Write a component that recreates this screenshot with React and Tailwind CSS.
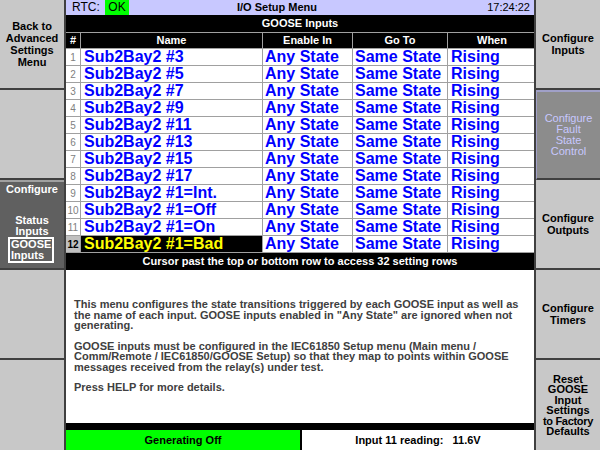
import React from "react";

const rows = [
  "Sub2Bay2 #3",
  "Sub2Bay2 #5",
  "Sub2Bay2 #7",
  "Sub2Bay2 #9",
  "Sub2Bay2 #11",
  "Sub2Bay2 #13",
  "Sub2Bay2 #15",
  "Sub2Bay2 #17",
  "Sub2Bay2 #1=Int.",
  "Sub2Bay2 #1=Off",
  "Sub2Bay2 #1=On",
  "Sub2Bay2 #1=Bad",
];

const font = { fontFamily: '"Liberation Sans", Arial, sans-serif' };

function SideBtn({ children, className = "" }) {
  return (
    <div
      className={
        "h-[90px] flex flex-col items-center justify-center text-center text-[11px] leading-[12px] font-bold border-b-2 border-[#404040] " +
        className
      }
    >
      {children}
    </div>
  );
}

export default function App() {
  return (
    <div className="w-[600px] h-[450px] flex bg-white overflow-hidden" style={font}>
      {/* Left column */}
      <div className="w-[66px] flex flex-col border-r-2 border-[#404040] bg-[#c8c8c8] text-black">
        <SideBtn className="bg-[#c8c8c8]">
          <span>Back to</span>
          <span>Advanced</span>
          <span>Settings</span>
          <span>Menu</span>
        </SideBtn>
        <SideBtn className="bg-[#c8c8c8]" />
        <div className="h-[90px] flex flex-col items-center text-center text-[11px] leading-[11px] font-bold border-b-2 border-[#404040] bg-[#606060] text-white border-t-2 border-t-[#a0a0a0]">
          <span className="mt-[2px]">Configure</span>
          <span className="mt-[20px]">Status</span>
          <span>Inputs</span>
          <div className="border-2 border-white px-[1px] text-left leading-[11px] w-[46px] mr-[2px]">
            <div>GOOSE</div>
            <div>Inputs</div>
          </div>
        </div>
        <SideBtn className="bg-[#c8c8c8]" />
        <div className="h-[90px] bg-[#c8c8c8]" />
      </div>

      {/* Center */}
      <div className="w-[468px] flex flex-col">
        {/* top bar */}
        <div className="h-[15px] bg-[#c8c8ff] flex items-stretch text-[11px] font-bold text-black relative">
          <span className="ml-[6px] w-[33px] leading-[15px] text-[12px] font-normal">RTC:</span>
          <span className="w-[24px] bg-[#00ff00] text-center leading-[15px] text-[12px] font-normal">OK</span>
          <span className="absolute left-[171px] top-0 leading-[15px]">I/O Setup Menu</span>
          <span className="ml-auto mr-[4px] leading-[15px] font-normal">17:24:22</span>
        </div>
        <div className="h-[17px] bg-black text-white text-[11px] font-bold flex items-center justify-center">
          GOOSE Inputs
        </div>
        {/* table */}
        <div className="grid grid-cols-[14px_181px_89px_94px_88px] gap-x-[1px] bg-[#a0a0a0] border-t border-[#a0a0a0]">
          {["#", "Name", "Enable In", "Go To", "When"].map((h) => (
            <div key={h} className="h-[15px] bg-black text-white text-[11px] font-bold flex items-center justify-center">
              {h}
            </div>
          ))}
        </div>
        <div className="grid grid-cols-[14px_181px_89px_94px_88px] gap-x-[1px] gap-y-[1px] bg-[#a0a0a0] pt-[1px]">
          {rows.map((name, i) => {
            const last = i === rows.length - 1;
            return (
              <React.Fragment key={name}>
                <div
                  className={
                    "h-[16px] flex items-center justify-center text-[10px] " +
                    (last ? "bg-[#c0c0c0] text-black font-bold" : "bg-white text-[#808080]")
                  }
                >
                  {i + 1}
                </div>
                <div
                  className={
                    "h-[16px] flex items-center pl-[3px] text-[16px] font-bold leading-none " +
                    (last ? "bg-black text-[#ffff00]" : "bg-white text-[#0000ff]")
                  }
                >
                  {name}
                </div>
                <div className="h-[16px] bg-white flex items-center pl-[2px] text-[16px] font-bold text-[#0000ff] leading-none">
                  Any State
                </div>
                <div className="h-[16px] bg-white flex items-center pl-[2px] text-[16px] font-bold text-[#0000ff] leading-none">
                  Same State
                </div>
                <div className="h-[16px] bg-white flex items-center pl-[3px] text-[16px] font-bold text-[#0000ff] leading-none">
                  Rising
                </div>
              </React.Fragment>
            );
          })}
        </div>
        <div className="h-[18px] bg-black text-white text-[11px] font-bold flex items-center justify-center border-t border-[#a0a0a0]">
          Cursor past the top or bottom row to access 32 setting rows
        </div>
        {/* description */}
        <div className="flex-1 bg-white pl-[8px] pr-[6px] pt-[29px] text-[11px] leading-[10.5px] font-bold text-[#404040]">
          <p>
            This menu configures the state transitions triggered by each GOOSE input as well as
            the name of each input. GOOSE inputs enabled in "Any State" are ignored when not
            generating.
          </p>
          <p className="mt-[10px]">
            GOOSE inputs must be configured in the IEC61850 Setup menu (Main menu /<br />
            Comm/Remote / IEC61850/GOOSE Setup) so that they map to points within GOOSE
            messages received from the relay(s) under test.
          </p>
          <p className="mt-[10px]">Press HELP for more details.</p>
        </div>
        <div className="h-[7px] bg-black" />
        <div className="h-[20px] flex text-[11px] font-bold text-black">
          <div className="w-[234px] bg-[#00ff00] flex items-center justify-center">Generating Off</div>
          <div className="flex-1 bg-white border-l-2 border-black flex items-center justify-center whitespace-pre">
            {"Input 11 reading:   11.6V"}
          </div>
        </div>
      </div>

      {/* Right column */}
      <div className="w-[66px] flex flex-col border-l-2 border-[#404040] bg-[#c8c8c8] text-black">
        <SideBtn className="bg-[#c8c8c8]">
          <span>Configure</span>
          <span>Inputs</span>
        </SideBtn>
        <div className="h-[90px] flex flex-col items-center justify-center text-center text-[11px] leading-[11px] border-b-2 border-[#404040] bg-[#8c8c8c] text-[#c8c8ff] border-t-2 border-t-[#a0a0c8] border-l border-l-[#a0a0c8]">
          <span>Configure</span>
          <span>Fault</span>
          <span>State</span>
          <span>Control</span>
        </div>
        <SideBtn className="bg-[#c8c8c8]">
          <span>Configure</span>
          <span>Outputs</span>
        </SideBtn>
        <SideBtn className="bg-[#c8c8c8]">
          <span>Configure</span>
          <span>Timers</span>
        </SideBtn>
        <div className="h-[90px] flex flex-col items-center justify-center text-center text-[11px] leading-[10.5px] font-bold bg-[#c8c8c8]">
          <span>Reset</span>
          <span>GOOSE</span>
          <span>Input</span>
          <span>Settings</span>
          <span className="tracking-[-0.3px]">to Factory</span>
          <span>Defaults</span>
        </div>
      </div>
    </div>
  );
}
